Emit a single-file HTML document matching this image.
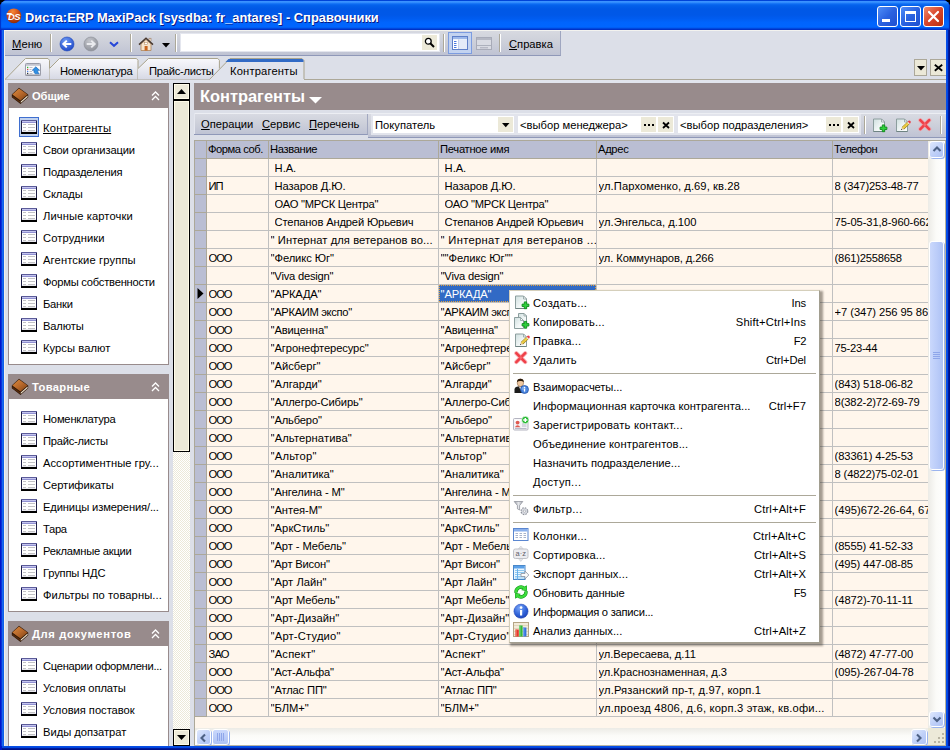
<!DOCTYPE html>
<html lang="ru"><head><meta charset="utf-8"><title>Dиста:ERP MaxiPack - Справочники</title>
<style>
*{box-sizing:border-box;margin:0;padding:0}
html,body{width:950px;height:750px;overflow:hidden;background:#000}
body{font-family:"Liberation Sans", "DejaVu Sans", sans-serif;font-size:11.2px;color:#000;position:relative;-webkit-font-smoothing:none}
.abs{position:absolute}
#win{position:absolute;left:0;top:0;width:950px;height:750px;background:#0054e3;border-radius:8px 8px 0 0;overflow:hidden;box-shadow:inset 1px 0 0 #0019cf,inset -1px 0 0 #0019cf}
#title{position:absolute;left:0;top:0;width:950px;height:30px;background:linear-gradient(to bottom,#0044d8 0%,#0044d8 2%,#3a92ff 5%,#2f8afc 9%,#0d6cf3 13%,#0360ea 19%,#0058e6 30%,#0058e8 50%,#005cf0 62%,#0064fc 74%,#0066ff 90%,#0058ec 93%,#0036cc 97%,#002cc0 100%);box-shadow:inset 2px 0 1px -1px #0030c8,inset -2px 0 1px -1px #0024b0}
#title .t{position:absolute;left:25px;top:9.5px;font-family:"Liberation Sans", "DejaVu Sans", sans-serif;font-weight:bold;font-size:13.5px;color:#fff;text-shadow:1px 1px 0 #0a1883;white-space:nowrap;transform-origin:0 50%;transform:scaleX(0.954)}
#client{position:absolute;left:4px;top:30px;width:942px;height:716px;background:#dcdfe8}
.nowrap{white-space:nowrap}
u{text-decoration:underline}
</style></head><body>
<div id="win">
<div id="title"><svg class="abs" style="left:6px;top:8px" width="16" height="16" viewBox="0 0 16 16">
<defs><radialGradient id="og" cx="42%" cy="22%" r="80%"><stop offset="0" stop-color="#f58838"/><stop offset="0.5" stop-color="#d04e16"/><stop offset="1" stop-color="#8c2a06"/></radialGradient></defs>
<circle cx="7.900" cy="7.800" r="7.400" fill="url(#og)"/>
<rect x="0.700" y="5" width="5" height="1.700" fill="#fff"/>
<text x="8" y="11.600" font-family="Liberation Sans, sans-serif" font-weight="bold" font-style="italic" font-size="9.400" fill="#fff" text-anchor="middle" letter-spacing="-0.500">DS</text></svg><div class="t">Dиста:ERP MaxiPack [sysdba: fr_antares] - Справочники</div><div class="abs" style="left:877px;top:6px;width:21px;height:21px;border:1px solid #fff;border-radius:3px;background:linear-gradient(135deg,#4f8df8 0%,#2b62e0 50%,#1e4fd0 100%)"><div class="abs" style="left:4px;top:12px;width:8px;height:3px;background:#fff"></div></div><div class="abs" style="left:900px;top:6px;width:21px;height:21px;border:1px solid #fff;border-radius:3px;background:linear-gradient(135deg,#4f8df8 0%,#2b62e0 50%,#1e4fd0 100%)"><div class="abs" style="left:4px;top:4px;width:11px;height:11px;border:1px solid #fff;border-top-width:3px"></div></div><div class="abs" style="left:923px;top:6px;width:21px;height:21px;border:1px solid #fff;border-radius:3px;background:linear-gradient(135deg,#ee8b6c 0%,#d8442a 50%,#b9300f 100%)"><svg class="abs" style="left:0;top:0" width="19" height="19"><path d="M5 5 L14 14 M14 5 L5 14" stroke="#fff" stroke-width="2.2" stroke-linecap="round"/></svg></div></div>
<div id="client"></div>
<div class="abs" style="left:4px;top:30px;width:942px;height:1px;background:#f3f3ef"></div><div class="abs" style="left:4px;top:31px;width:557px;height:25px;background:linear-gradient(to bottom,#d7d9e0 0%,#cccfd9 50%,#bfc3d3 100%);border-right:1px solid #9fa6c0;border-bottom:1px solid #8f98b8"></div><div class="abs nowrap" style="left:12px;top:38px"><u>М</u>еню</div><div class="abs" style="left:50px;top:34px;width:2px;height:18px;border-left:1px solid #aca899;border-right:1px solid #fff"></div><svg class="abs" style="left:59px;top:36px" width="16" height="16" viewBox="0 0 16 16"><defs><radialGradient id="bg1" cx="40%" cy="30%" r="75%"><stop offset="0" stop-color="#6f9cf5"/><stop offset="1" stop-color="#1c46c8"/></radialGradient></defs><circle cx="8" cy="8" r="7" fill="url(#bg1)" stroke="#2048b8" stroke-width="0.600"/><path d="M12.3 8 H4.5 M7.8 4.6 L4.3 8 L7.8 11.4" stroke="#fff" stroke-width="2" fill="none" stroke-linejoin="miter"/></svg><svg class="abs" style="left:83px;top:36px" width="16" height="16" viewBox="0 0 16 16"><defs><radialGradient id="bg2" cx="40%" cy="30%" r="75%"><stop offset="0" stop-color="#c4c6cc"/><stop offset="1" stop-color="#8c8f98"/></radialGradient></defs><circle cx="8" cy="8" r="7" fill="url(#bg2)" stroke="#8a8d96" stroke-width="0.600"/><path d="M3.7 8 H11.5 M8.2 4.6 L11.7 8 L8.2 11.4" stroke="#e9eaee" stroke-width="2" fill="none"/></svg><svg class="abs" style="left:109px;top:41px" width="10" height="7"><path d="M1 1.200 L5 4.800 L9 1.200" stroke="#2747d8" stroke-width="2" fill="none"/></svg><div class="abs" style="left:130px;top:34px;width:2px;height:18px;border-left:1px solid #aca899;border-right:1px solid #fff"></div><svg class="abs" style="left:138px;top:36px" width="16" height="16" viewBox="0 0 16 16"><rect x="11" y="2.200" width="2" height="3" fill="#f4e6d4" stroke="#8a6a50" stroke-width="0.500"/><path d="M3 8 L8 3.600 L13 8 V14.500 H3 Z" fill="#f6e4cc" stroke="#b08458" stroke-width="0.800"/><path d="M1 8.600 L8 2.200 L15 8.600" stroke="#4a3a30" stroke-width="1.500" fill="none"/><rect x="6.600" y="10" width="3" height="4.500" fill="#c8641e"/><rect x="6.600" y="6.300" width="2.800" height="2" fill="#fff" stroke="#b08458" stroke-width="0.500"/></svg><svg class="abs" style="left:161.500px;top:42.500px" width="8" height="5"><path d="M0 0 H8 L4 4.500 Z" fill="#000"/></svg><div class="abs" style="left:175px;top:34px;width:2px;height:18px;border-left:1px solid #aca899;border-right:1px solid #fff"></div><div class="abs" style="left:181px;top:34px;width:258px;height:17px;background:#fff;box-shadow:0 0 0 1px #e4e6ee"></div><div class="abs" style="left:422px;top:35px;width:15px;height:15px;background:#ece9d8"></div><svg class="abs" style="left:424px;top:37px" width="12" height="12" viewBox="0 0 12 12"><circle cx="4.300" cy="4.300" r="2.900" stroke="#000" stroke-width="1.300" fill="#fff"/><path d="M6.500 6.500 L10 10" stroke="#000" stroke-width="2"/></svg><div class="abs" style="left:443px;top:34px;width:2px;height:18px;border-left:1px solid #aca899;border-right:1px solid #fff"></div><div class="abs" style="left:448px;top:32px;width:24px;height:22px;background:#c3d3f0;border:1px solid #7c9ce0"></div><svg class="abs" style="left:452px;top:36px" width="16" height="14" viewBox="0 0 16 14"><rect x="0.5" y="0.5" width="15" height="13" fill="#fff" stroke="#5f80c8"/><rect x="1" y="1" width="14" height="2.200" fill="#9db8ea"/><rect x="6.500" y="3.500" width="0.800" height="9.500" fill="#8aa4dc"/><rect x="7.300" y="3.500" width="7.700" height="9.500" fill="#e4ebf8"/><path d="M2 5.500h2.500M2 7.500h2.500M2 9.500h2.500M2 11.500h2.500" stroke="#4a7ae0" stroke-width="1"/></svg><svg class="abs" style="left:476px;top:37px" width="16" height="13" viewBox="0 0 16 13"><rect x="0.5" y="0.5" width="15" height="12" fill="#d9dbe3" stroke="#a8abb8"/><rect x="1" y="1" width="14" height="2" fill="#b5b8c4"/><rect x="1" y="8" width="14" height="0.9" fill="#a8abb8"/><path d="M4 10.8h8" stroke="#a8abb8" stroke-width="1"/></svg><div class="abs" style="left:499px;top:34px;width:2px;height:18px;border-left:1px solid #aca899;border-right:1px solid #fff"></div><div class="abs nowrap" style="left:509px;top:38px"><u>С</u>правка</div><div class="abs" style="left:4px;top:79px;width:942px;height:1px;background:#aca899"></div><div class="abs" style="left:4px;top:80px;width:942px;height:3px;background:#e1e4ed"></div><svg class="abs" style="left:4px;top:57px" width="320" height="24" viewBox="0 0 320 24">
<defs><linearGradient id="tg" x1="0" y1="0" x2="0" y2="1"><stop offset="0" stop-color="#f8f8fc"/><stop offset="0.5" stop-color="#e9eaf1"/><stop offset="1" stop-color="#d6d8e4"/></linearGradient></defs>
<path d="M1 22.500 L21.500 1.500 H44 L45.500 3.300 V22.500 Z" fill="url(#tg)"/>
<path d="M1 22.500 L21.500 1.500 H44 L45.500 3.300 V22.500" fill="none" stroke="#a9a38c" stroke-width="1"/>
<path d="M45.500 11.500 L55.500 1.500 H132.500 L134 3.300 V22.500 H45.500 Z" fill="url(#tg)"/>
<path d="M45.500 11.500 L55.500 1.500 H132.500 L134 3.300 V22.500" fill="none" stroke="#a9a38c" stroke-width="1"/>
<path d="M134 11.500 L144.500 1.500 H213.800 L215.400 3.300 V11.500 L205.500 22.500 H134 Z" fill="url(#tg)"/>
<path d="M134 11.500 L144.500 1.500 H213.800 L215.400 3.300 V11.500" fill="none" stroke="#a9a38c" stroke-width="1"/>
<path d="M205.500 24 V22.500 L226 1.500 H298 L300 3.500 V24 Z" fill="#e0e3ec"/>
<path d="M205.500 22.500 L226 1.500 H298 L300 3.500 V22" fill="none" stroke="#a9a38c" stroke-width="1"/>
<path d="M224.500 2 H298.500 L299.500 3.500 V5 H221.500 Z" fill="#316ac5"/>
</svg><div class="abs nowrap" style="left:60px;top:65px;letter-spacing:-0.216px">Номенклатура</div><div class="abs nowrap" style="left:149px;top:65px;letter-spacing:-0.272px">Прайс-листы</div><div class="abs nowrap" style="left:230px;top:65px;letter-spacing:0.155px">Контрагенты</div><svg class="abs" style="left:25px;top:63px" width="16" height="13" viewBox="0 0 16 13"><rect x="0.500" y="0.500" width="15" height="12" rx="0.800" fill="#fbfbfd" stroke="#9a9ca8"/><rect x="1" y="1" width="14" height="1.800" fill="#c4c6d0"/><rect x="0.500" y="11.500" width="15" height="1" fill="#8a8c98"/><rect x="2" y="3.800" width="1.300" height="1.300" fill="#2fb82f"/><rect x="2" y="5.800" width="1.300" height="1.300" fill="#d84a40"/><rect x="2" y="7.800" width="1.300" height="1.300" fill="#4a84f0"/><rect x="2" y="9.800" width="1.300" height="1.300" fill="#333"/><path d="M4.500 4.500h3M4.500 6.500h2M4.500 8.500h2.500M4.500 10.500h3" stroke="#b8bac4" stroke-width="0.900"/><path d="M10.800 3.800 L14.600 7.300 H12.800 L12.800 9 L14.200 10.800 H10.200 L9 9.300 V7.300 H7.200 Z" fill="#2f90e4" stroke="#1a62b0" stroke-width="0.600"/></svg><div class="abs" style="left:914px;top:59px;width:13px;height:17px;background:#ece9d8;border:1px solid #aca899"></div><svg class="abs" style="left:916.5px;top:66px" width="8" height="5"><path d="M0 0 H8 L4 4.500 Z" fill="#000"/></svg><div class="abs" style="left:930px;top:59px;width:17px;height:17px;background:#ece9d8;border:1px solid #aca899"></div><svg class="abs" style="left:933.5px;top:64px" width="9" height="8"><path d="M0.800 0.800 L8.200 6.800 M8.200 0.800 L0.800 6.800" stroke="#000" stroke-width="1.800"/></svg><div class="abs" style="left:8px;top:83px;width:161px;height:282px;background:#fff;border:1px solid #988b8c"></div><div class="abs" style="left:8px;top:83px;width:161px;height:25px;background:#988b8c"></div><svg class="abs" style="left:11px;top:87px" width="18" height="18" viewBox="0 0 18 18"><defs><linearGradient id="bk87" x1="0" y1="0" x2="1" y2="1"><stop offset="0" stop-color="#dc8c40"/><stop offset="0.5" stop-color="#b8682a"/><stop offset="1" stop-color="#7a3f12"/></linearGradient></defs><path d="M0.800 7.500 L8 0.800 L17.200 7.500 L17.200 10.300 L9.500 17 L0.800 10.300 Z" fill="#2e1606"/><path d="M1.300 7.600 L8 1.500 L16.600 7.600 L9.500 13.600 Z" fill="url(#bk87)"/><path d="M9.700 14.400 L16.600 8.600 L16.600 10 L9.700 16 Z" fill="#efe4cf"/><path d="M1.400 8.700 L9.300 14.500 L9.300 16 L1.400 10 Z" fill="#5a2c0c"/></svg><div class="abs nowrap" style="left:32px;top:90px;color:#fff;font-weight:bold;letter-spacing:-0.111px">Общие</div><svg class="abs" style="left:151px;top:91px" width="9" height="10"><path d="M1 4.500 L4.500 1 L8 4.500 M1 9 L4.500 5.500 L8 9" stroke="#fff" stroke-width="1.300" fill="none"/></svg><div class="abs" style="left:19px;top:117px;width:20px;height:20px;background:#c1d2ee;border:1px solid #3f6fd0"></div><svg class="abs" style="left:21px;top:120px" width="16" height="14" viewBox="0 0 16 14"><rect x="0" y="0" width="16" height="14" fill="#1e1e46"/><rect x="1" y="1" width="14" height="11" fill="#fff"/><rect x="0" y="0" width="16" height="1" fill="#5c5c9a"/><rect x="1" y="1" width="14" height="1" fill="#c4c4ee"/><rect x="1" y="2" width="14" height="1" fill="#9090d2"/><rect x="0" y="12" width="16" height="2" fill="#000"/><rect x="1" y="11" width="14" height="1" fill="#e8e8ee"/><path d="M2 4.500h3M7 4.500h7M2 7.500h3M7 7.500h7M2 10.500h3M7 10.500h7" stroke="#c2c2c6" stroke-width="1"/></svg><div class="abs nowrap" style="left:43px;top:122px;letter-spacing:0.21px"><u>Контрагенты</u></div><svg class="abs" style="left:21px;top:142px" width="16" height="14" viewBox="0 0 16 14"><rect x="0" y="0" width="16" height="14" fill="#1e1e46"/><rect x="1" y="1" width="14" height="11" fill="#fff"/><rect x="0" y="0" width="16" height="1" fill="#5c5c9a"/><rect x="1" y="1" width="14" height="1" fill="#c4c4ee"/><rect x="1" y="2" width="14" height="1" fill="#9090d2"/><rect x="0" y="12" width="16" height="2" fill="#000"/><rect x="1" y="11" width="14" height="1" fill="#e8e8ee"/><path d="M2 4.500h3M7 4.500h7M2 7.500h3M7 7.500h7M2 10.500h3M7 10.500h7" stroke="#c2c2c6" stroke-width="1"/></svg><div class="abs nowrap" style="left:43px;top:144px;letter-spacing:-0.179px">Свои организации</div><svg class="abs" style="left:21px;top:164px" width="16" height="14" viewBox="0 0 16 14"><rect x="0" y="0" width="16" height="14" fill="#1e1e46"/><rect x="1" y="1" width="14" height="11" fill="#fff"/><rect x="0" y="0" width="16" height="1" fill="#5c5c9a"/><rect x="1" y="1" width="14" height="1" fill="#c4c4ee"/><rect x="1" y="2" width="14" height="1" fill="#9090d2"/><rect x="0" y="12" width="16" height="2" fill="#000"/><rect x="1" y="11" width="14" height="1" fill="#e8e8ee"/><path d="M2 4.500h3M7 4.500h7M2 7.500h3M7 7.500h7M2 10.500h3M7 10.500h7" stroke="#c2c2c6" stroke-width="1"/></svg><div class="abs nowrap" style="left:43px;top:166px;letter-spacing:-0.144px">Подразделения</div><svg class="abs" style="left:21px;top:186px" width="16" height="14" viewBox="0 0 16 14"><rect x="0" y="0" width="16" height="14" fill="#1e1e46"/><rect x="1" y="1" width="14" height="11" fill="#fff"/><rect x="0" y="0" width="16" height="1" fill="#5c5c9a"/><rect x="1" y="1" width="14" height="1" fill="#c4c4ee"/><rect x="1" y="2" width="14" height="1" fill="#9090d2"/><rect x="0" y="12" width="16" height="2" fill="#000"/><rect x="1" y="11" width="14" height="1" fill="#e8e8ee"/><path d="M2 4.500h3M7 4.500h7M2 7.500h3M7 7.500h7M2 10.500h3M7 10.500h7" stroke="#c2c2c6" stroke-width="1"/></svg><div class="abs nowrap" style="left:43px;top:188px;letter-spacing:-0.137px">Склады</div><svg class="abs" style="left:21px;top:208px" width="16" height="14" viewBox="0 0 16 14"><rect x="0" y="0" width="16" height="14" fill="#1e1e46"/><rect x="1" y="1" width="14" height="11" fill="#fff"/><rect x="0" y="0" width="16" height="1" fill="#5c5c9a"/><rect x="1" y="1" width="14" height="1" fill="#c4c4ee"/><rect x="1" y="2" width="14" height="1" fill="#9090d2"/><rect x="0" y="12" width="16" height="2" fill="#000"/><rect x="1" y="11" width="14" height="1" fill="#e8e8ee"/><path d="M2 4.500h3M7 4.500h7M2 7.500h3M7 7.500h7M2 10.500h3M7 10.500h7" stroke="#c2c2c6" stroke-width="1"/></svg><div class="abs nowrap" style="left:43px;top:210px;letter-spacing:0.102px">Личные карточки</div><svg class="abs" style="left:21px;top:230px" width="16" height="14" viewBox="0 0 16 14"><rect x="0" y="0" width="16" height="14" fill="#1e1e46"/><rect x="1" y="1" width="14" height="11" fill="#fff"/><rect x="0" y="0" width="16" height="1" fill="#5c5c9a"/><rect x="1" y="1" width="14" height="1" fill="#c4c4ee"/><rect x="1" y="2" width="14" height="1" fill="#9090d2"/><rect x="0" y="12" width="16" height="2" fill="#000"/><rect x="1" y="11" width="14" height="1" fill="#e8e8ee"/><path d="M2 4.500h3M7 4.500h7M2 7.500h3M7 7.500h7M2 10.500h3M7 10.500h7" stroke="#c2c2c6" stroke-width="1"/></svg><div class="abs nowrap" style="left:43px;top:232px;letter-spacing:0.109px">Сотрудники</div><svg class="abs" style="left:21px;top:252px" width="16" height="14" viewBox="0 0 16 14"><rect x="0" y="0" width="16" height="14" fill="#1e1e46"/><rect x="1" y="1" width="14" height="11" fill="#fff"/><rect x="0" y="0" width="16" height="1" fill="#5c5c9a"/><rect x="1" y="1" width="14" height="1" fill="#c4c4ee"/><rect x="1" y="2" width="14" height="1" fill="#9090d2"/><rect x="0" y="12" width="16" height="2" fill="#000"/><rect x="1" y="11" width="14" height="1" fill="#e8e8ee"/><path d="M2 4.500h3M7 4.500h7M2 7.500h3M7 7.500h7M2 10.500h3M7 10.500h7" stroke="#c2c2c6" stroke-width="1"/></svg><div class="abs nowrap" style="left:43px;top:254px;letter-spacing:0.131px">Агентские группы</div><svg class="abs" style="left:21px;top:274px" width="16" height="14" viewBox="0 0 16 14"><rect x="0" y="0" width="16" height="14" fill="#1e1e46"/><rect x="1" y="1" width="14" height="11" fill="#fff"/><rect x="0" y="0" width="16" height="1" fill="#5c5c9a"/><rect x="1" y="1" width="14" height="1" fill="#c4c4ee"/><rect x="1" y="2" width="14" height="1" fill="#9090d2"/><rect x="0" y="12" width="16" height="2" fill="#000"/><rect x="1" y="11" width="14" height="1" fill="#e8e8ee"/><path d="M2 4.500h3M7 4.500h7M2 7.500h3M7 7.500h7M2 10.500h3M7 10.500h7" stroke="#c2c2c6" stroke-width="1"/></svg><div class="abs nowrap" style="left:43px;top:276px;letter-spacing:-0.238px">Формы собственности</div><svg class="abs" style="left:21px;top:296px" width="16" height="14" viewBox="0 0 16 14"><rect x="0" y="0" width="16" height="14" fill="#1e1e46"/><rect x="1" y="1" width="14" height="11" fill="#fff"/><rect x="0" y="0" width="16" height="1" fill="#5c5c9a"/><rect x="1" y="1" width="14" height="1" fill="#c4c4ee"/><rect x="1" y="2" width="14" height="1" fill="#9090d2"/><rect x="0" y="12" width="16" height="2" fill="#000"/><rect x="1" y="11" width="14" height="1" fill="#e8e8ee"/><path d="M2 4.500h3M7 4.500h7M2 7.500h3M7 7.500h7M2 10.500h3M7 10.500h7" stroke="#c2c2c6" stroke-width="1"/></svg><div class="abs nowrap" style="left:43px;top:298px;letter-spacing:-0.238px">Банки</div><svg class="abs" style="left:21px;top:318px" width="16" height="14" viewBox="0 0 16 14"><rect x="0" y="0" width="16" height="14" fill="#1e1e46"/><rect x="1" y="1" width="14" height="11" fill="#fff"/><rect x="0" y="0" width="16" height="1" fill="#5c5c9a"/><rect x="1" y="1" width="14" height="1" fill="#c4c4ee"/><rect x="1" y="2" width="14" height="1" fill="#9090d2"/><rect x="0" y="12" width="16" height="2" fill="#000"/><rect x="1" y="11" width="14" height="1" fill="#e8e8ee"/><path d="M2 4.500h3M7 4.500h7M2 7.500h3M7 7.500h7M2 10.500h3M7 10.500h7" stroke="#c2c2c6" stroke-width="1"/></svg><div class="abs nowrap" style="left:43px;top:320px;letter-spacing:-0.155px">Валюты</div><svg class="abs" style="left:21px;top:340px" width="16" height="14" viewBox="0 0 16 14"><rect x="0" y="0" width="16" height="14" fill="#1e1e46"/><rect x="1" y="1" width="14" height="11" fill="#fff"/><rect x="0" y="0" width="16" height="1" fill="#5c5c9a"/><rect x="1" y="1" width="14" height="1" fill="#c4c4ee"/><rect x="1" y="2" width="14" height="1" fill="#9090d2"/><rect x="0" y="12" width="16" height="2" fill="#000"/><rect x="1" y="11" width="14" height="1" fill="#e8e8ee"/><path d="M2 4.500h3M7 4.500h7M2 7.500h3M7 7.500h7M2 10.500h3M7 10.500h7" stroke="#c2c2c6" stroke-width="1"/></svg><div class="abs nowrap" style="left:43px;top:342px;letter-spacing:0.055px">Курсы валют</div><div class="abs" style="left:8px;top:374px;width:161px;height:238px;background:#fff;border:1px solid #988b8c"></div><div class="abs" style="left:8px;top:374px;width:161px;height:25px;background:#988b8c"></div><svg class="abs" style="left:11px;top:378px" width="18" height="18" viewBox="0 0 18 18"><defs><linearGradient id="bk378" x1="0" y1="0" x2="1" y2="1"><stop offset="0" stop-color="#dc8c40"/><stop offset="0.5" stop-color="#b8682a"/><stop offset="1" stop-color="#7a3f12"/></linearGradient></defs><path d="M0.800 7.500 L8 0.800 L17.200 7.500 L17.200 10.300 L9.500 17 L0.800 10.300 Z" fill="#2e1606"/><path d="M1.300 7.600 L8 1.500 L16.600 7.600 L9.500 13.600 Z" fill="url(#bk378)"/><path d="M9.700 14.400 L16.600 8.600 L16.600 10 L9.700 16 Z" fill="#efe4cf"/><path d="M1.400 8.700 L9.300 14.500 L9.300 16 L1.400 10 Z" fill="#5a2c0c"/></svg><div class="abs nowrap" style="left:32px;top:381px;color:#fff;font-weight:bold;letter-spacing:0.34px">Товарные</div><svg class="abs" style="left:151px;top:382px" width="9" height="10"><path d="M1 4.500 L4.500 1 L8 4.500 M1 9 L4.500 5.500 L8 9" stroke="#fff" stroke-width="1.300" fill="none"/></svg><svg class="abs" style="left:21px;top:411px" width="16" height="14" viewBox="0 0 16 14"><rect x="0" y="0" width="16" height="14" fill="#1e1e46"/><rect x="1" y="1" width="14" height="11" fill="#fff"/><rect x="0" y="0" width="16" height="1" fill="#5c5c9a"/><rect x="1" y="1" width="14" height="1" fill="#c4c4ee"/><rect x="1" y="2" width="14" height="1" fill="#9090d2"/><rect x="0" y="12" width="16" height="2" fill="#000"/><rect x="1" y="11" width="14" height="1" fill="#e8e8ee"/><path d="M2 4.500h3M7 4.500h7M2 7.500h3M7 7.500h7M2 10.500h3M7 10.500h7" stroke="#c2c2c6" stroke-width="1"/></svg><div class="abs nowrap" style="left:43px;top:413px;letter-spacing:-0.208px">Номенклатура</div><svg class="abs" style="left:21px;top:433px" width="16" height="14" viewBox="0 0 16 14"><rect x="0" y="0" width="16" height="14" fill="#1e1e46"/><rect x="1" y="1" width="14" height="11" fill="#fff"/><rect x="0" y="0" width="16" height="1" fill="#5c5c9a"/><rect x="1" y="1" width="14" height="1" fill="#c4c4ee"/><rect x="1" y="2" width="14" height="1" fill="#9090d2"/><rect x="0" y="12" width="16" height="2" fill="#000"/><rect x="1" y="11" width="14" height="1" fill="#e8e8ee"/><path d="M2 4.500h3M7 4.500h7M2 7.500h3M7 7.500h7M2 10.500h3M7 10.500h7" stroke="#c2c2c6" stroke-width="1"/></svg><div class="abs nowrap" style="left:43px;top:435px;letter-spacing:-0.254px">Прайс-листы</div><svg class="abs" style="left:21px;top:455px" width="16" height="14" viewBox="0 0 16 14"><rect x="0" y="0" width="16" height="14" fill="#1e1e46"/><rect x="1" y="1" width="14" height="11" fill="#fff"/><rect x="0" y="0" width="16" height="1" fill="#5c5c9a"/><rect x="1" y="1" width="14" height="1" fill="#c4c4ee"/><rect x="1" y="2" width="14" height="1" fill="#9090d2"/><rect x="0" y="12" width="16" height="2" fill="#000"/><rect x="1" y="11" width="14" height="1" fill="#e8e8ee"/><path d="M2 4.500h3M7 4.500h7M2 7.500h3M7 7.500h7M2 10.500h3M7 10.500h7" stroke="#c2c2c6" stroke-width="1"/></svg><div class="abs nowrap" style="left:43px;top:457px;letter-spacing:0.034px">Ассортиментные гру...</div><svg class="abs" style="left:21px;top:477px" width="16" height="14" viewBox="0 0 16 14"><rect x="0" y="0" width="16" height="14" fill="#1e1e46"/><rect x="1" y="1" width="14" height="11" fill="#fff"/><rect x="0" y="0" width="16" height="1" fill="#5c5c9a"/><rect x="1" y="1" width="14" height="1" fill="#c4c4ee"/><rect x="1" y="2" width="14" height="1" fill="#9090d2"/><rect x="0" y="12" width="16" height="2" fill="#000"/><rect x="1" y="11" width="14" height="1" fill="#e8e8ee"/><path d="M2 4.500h3M7 4.500h7M2 7.500h3M7 7.500h7M2 10.500h3M7 10.500h7" stroke="#c2c2c6" stroke-width="1"/></svg><div class="abs nowrap" style="left:43px;top:479px;letter-spacing:-0.063px">Сертификаты</div><svg class="abs" style="left:21px;top:499px" width="16" height="14" viewBox="0 0 16 14"><rect x="0" y="0" width="16" height="14" fill="#1e1e46"/><rect x="1" y="1" width="14" height="11" fill="#fff"/><rect x="0" y="0" width="16" height="1" fill="#5c5c9a"/><rect x="1" y="1" width="14" height="1" fill="#c4c4ee"/><rect x="1" y="2" width="14" height="1" fill="#9090d2"/><rect x="0" y="12" width="16" height="2" fill="#000"/><rect x="1" y="11" width="14" height="1" fill="#e8e8ee"/><path d="M2 4.500h3M7 4.500h7M2 7.500h3M7 7.500h7M2 10.500h3M7 10.500h7" stroke="#c2c2c6" stroke-width="1"/></svg><div class="abs nowrap" style="left:43px;top:501px;letter-spacing:-0.147px">Единицы измерения/...</div><svg class="abs" style="left:21px;top:521px" width="16" height="14" viewBox="0 0 16 14"><rect x="0" y="0" width="16" height="14" fill="#1e1e46"/><rect x="1" y="1" width="14" height="11" fill="#fff"/><rect x="0" y="0" width="16" height="1" fill="#5c5c9a"/><rect x="1" y="1" width="14" height="1" fill="#c4c4ee"/><rect x="1" y="2" width="14" height="1" fill="#9090d2"/><rect x="0" y="12" width="16" height="2" fill="#000"/><rect x="1" y="11" width="14" height="1" fill="#e8e8ee"/><path d="M2 4.500h3M7 4.500h7M2 7.500h3M7 7.500h7M2 10.500h3M7 10.500h7" stroke="#c2c2c6" stroke-width="1"/></svg><div class="abs nowrap" style="left:43px;top:523px;letter-spacing:-0.3px">Тара</div><svg class="abs" style="left:21px;top:543px" width="16" height="14" viewBox="0 0 16 14"><rect x="0" y="0" width="16" height="14" fill="#1e1e46"/><rect x="1" y="1" width="14" height="11" fill="#fff"/><rect x="0" y="0" width="16" height="1" fill="#5c5c9a"/><rect x="1" y="1" width="14" height="1" fill="#c4c4ee"/><rect x="1" y="2" width="14" height="1" fill="#9090d2"/><rect x="0" y="12" width="16" height="2" fill="#000"/><rect x="1" y="11" width="14" height="1" fill="#e8e8ee"/><path d="M2 4.500h3M7 4.500h7M2 7.500h3M7 7.500h7M2 10.500h3M7 10.500h7" stroke="#c2c2c6" stroke-width="1"/></svg><div class="abs nowrap" style="left:43px;top:545px;letter-spacing:-0.242px">Рекламные акции</div><svg class="abs" style="left:21px;top:565px" width="16" height="14" viewBox="0 0 16 14"><rect x="0" y="0" width="16" height="14" fill="#1e1e46"/><rect x="1" y="1" width="14" height="11" fill="#fff"/><rect x="0" y="0" width="16" height="1" fill="#5c5c9a"/><rect x="1" y="1" width="14" height="1" fill="#c4c4ee"/><rect x="1" y="2" width="14" height="1" fill="#9090d2"/><rect x="0" y="12" width="16" height="2" fill="#000"/><rect x="1" y="11" width="14" height="1" fill="#e8e8ee"/><path d="M2 4.500h3M7 4.500h7M2 7.500h3M7 7.500h7M2 10.500h3M7 10.500h7" stroke="#c2c2c6" stroke-width="1"/></svg><div class="abs nowrap" style="left:43px;top:567px;letter-spacing:-0.183px">Группы НДС</div><svg class="abs" style="left:21px;top:587px" width="16" height="14" viewBox="0 0 16 14"><rect x="0" y="0" width="16" height="14" fill="#1e1e46"/><rect x="1" y="1" width="14" height="11" fill="#fff"/><rect x="0" y="0" width="16" height="1" fill="#5c5c9a"/><rect x="1" y="1" width="14" height="1" fill="#c4c4ee"/><rect x="1" y="2" width="14" height="1" fill="#9090d2"/><rect x="0" y="12" width="16" height="2" fill="#000"/><rect x="1" y="11" width="14" height="1" fill="#e8e8ee"/><path d="M2 4.500h3M7 4.500h7M2 7.500h3M7 7.500h7M2 10.500h3M7 10.500h7" stroke="#c2c2c6" stroke-width="1"/></svg><div class="abs nowrap" style="left:43px;top:589px;letter-spacing:0.083px">Фильтры по товарны...</div><div class="abs" style="left:8px;top:621px;width:161px;height:139px;background:#fff;border:1px solid #988b8c"></div><div class="abs" style="left:8px;top:621px;width:161px;height:25px;background:#988b8c"></div><svg class="abs" style="left:11px;top:625px" width="18" height="18" viewBox="0 0 18 18"><defs><linearGradient id="bk625" x1="0" y1="0" x2="1" y2="1"><stop offset="0" stop-color="#dc8c40"/><stop offset="0.5" stop-color="#b8682a"/><stop offset="1" stop-color="#7a3f12"/></linearGradient></defs><path d="M0.800 7.500 L8 0.800 L17.200 7.500 L17.200 10.300 L9.500 17 L0.800 10.300 Z" fill="#2e1606"/><path d="M1.300 7.600 L8 1.500 L16.600 7.600 L9.500 13.600 Z" fill="url(#bk625)"/><path d="M9.700 14.400 L16.600 8.600 L16.600 10 L9.700 16 Z" fill="#efe4cf"/><path d="M1.400 8.700 L9.300 14.500 L9.300 16 L1.400 10 Z" fill="#5a2c0c"/></svg><div class="abs nowrap" style="left:32px;top:628px;color:#fff;font-weight:bold;letter-spacing:0.641px">Для документов</div><svg class="abs" style="left:151px;top:629px" width="9" height="10"><path d="M1 4.500 L4.500 1 L8 4.500 M1 9 L4.500 5.500 L8 9" stroke="#fff" stroke-width="1.300" fill="none"/></svg><svg class="abs" style="left:21px;top:658px" width="16" height="14" viewBox="0 0 16 14"><rect x="0" y="0" width="16" height="14" fill="#1e1e46"/><rect x="1" y="1" width="14" height="11" fill="#fff"/><rect x="0" y="0" width="16" height="1" fill="#5c5c9a"/><rect x="1" y="1" width="14" height="1" fill="#c4c4ee"/><rect x="1" y="2" width="14" height="1" fill="#9090d2"/><rect x="0" y="12" width="16" height="2" fill="#000"/><rect x="1" y="11" width="14" height="1" fill="#e8e8ee"/><path d="M2 4.500h3M7 4.500h7M2 7.500h3M7 7.500h7M2 10.500h3M7 10.500h7" stroke="#c2c2c6" stroke-width="1"/></svg><div class="abs nowrap" style="left:43px;top:660px;letter-spacing:-0.285px">Сценарии оформлени...</div><svg class="abs" style="left:21px;top:680px" width="16" height="14" viewBox="0 0 16 14"><rect x="0" y="0" width="16" height="14" fill="#1e1e46"/><rect x="1" y="1" width="14" height="11" fill="#fff"/><rect x="0" y="0" width="16" height="1" fill="#5c5c9a"/><rect x="1" y="1" width="14" height="1" fill="#c4c4ee"/><rect x="1" y="2" width="14" height="1" fill="#9090d2"/><rect x="0" y="12" width="16" height="2" fill="#000"/><rect x="1" y="11" width="14" height="1" fill="#e8e8ee"/><path d="M2 4.500h3M7 4.500h7M2 7.500h3M7 7.500h7M2 10.500h3M7 10.500h7" stroke="#c2c2c6" stroke-width="1"/></svg><div class="abs nowrap" style="left:43px;top:682px;letter-spacing:-0.103px">Условия оплаты</div><svg class="abs" style="left:21px;top:702px" width="16" height="14" viewBox="0 0 16 14"><rect x="0" y="0" width="16" height="14" fill="#1e1e46"/><rect x="1" y="1" width="14" height="11" fill="#fff"/><rect x="0" y="0" width="16" height="1" fill="#5c5c9a"/><rect x="1" y="1" width="14" height="1" fill="#c4c4ee"/><rect x="1" y="2" width="14" height="1" fill="#9090d2"/><rect x="0" y="12" width="16" height="2" fill="#000"/><rect x="1" y="11" width="14" height="1" fill="#e8e8ee"/><path d="M2 4.500h3M7 4.500h7M2 7.500h3M7 7.500h7M2 10.500h3M7 10.500h7" stroke="#c2c2c6" stroke-width="1"/></svg><div class="abs nowrap" style="left:43px;top:704px;letter-spacing:-0.039px">Условия поставок</div><svg class="abs" style="left:21px;top:724px" width="16" height="14" viewBox="0 0 16 14"><rect x="0" y="0" width="16" height="14" fill="#1e1e46"/><rect x="1" y="1" width="14" height="11" fill="#fff"/><rect x="0" y="0" width="16" height="1" fill="#5c5c9a"/><rect x="1" y="1" width="14" height="1" fill="#c4c4ee"/><rect x="1" y="2" width="14" height="1" fill="#9090d2"/><rect x="0" y="12" width="16" height="2" fill="#000"/><rect x="1" y="11" width="14" height="1" fill="#e8e8ee"/><path d="M2 4.500h3M7 4.500h7M2 7.500h3M7 7.500h7M2 10.500h3M7 10.500h7" stroke="#c2c2c6" stroke-width="1"/></svg><div class="abs nowrap" style="left:43px;top:726px;letter-spacing:-0.032px">Виды допзатрат</div><div class="abs" style="left:173px;top:83px;width:17px;height:663px;background:repeating-conic-gradient(#fff 0% 25%,#ece9d8 0% 50%) 0 0/2px 2px"></div><div class="abs" style="left:173px;top:83px;width:17px;height:18px;background:#ece9d8;border:1px solid #000;border-bottom-width:2px;box-shadow:inset 1px 1px 0 #fffbe8,inset -1px -1px 0 #fffbe8"></div><svg class="abs" style="left:176px;top:88px" width="11" height="7"><path d="M1 6 H10 L5.500 1 Z" fill="#000"/></svg><div class="abs" style="left:173px;top:101px;width:17px;height:351px;background:#ece9d8;border:1px solid #000;border-top:none;box-shadow:inset 1px 1px 0 #fffbe8,inset -1px -1px 0 #fffbe8"></div><div class="abs" style="left:173px;top:729px;width:17px;height:17px;background:#ece9d8;border:1px solid #000;box-shadow:inset 1px 1px 0 #fffbe8,inset -1px -1px 0 #fffbe8"></div><svg class="abs" style="left:176px;top:734px" width="11" height="7"><path d="M1 1 H10 L5.500 6 Z" fill="#000"/></svg><div class="abs" style="left:194px;top:83px;width:752px;height:27px;background:#988b8c"></div><div class="abs nowrap" style="left:200px;top:87px;color:#fff;font-weight:bold;font-size:16.4px">Контрагенты</div><svg class="abs" style="left:309px;top:97px" width="13" height="7"><path d="M0 0 H13 L6.500 6.500 Z" fill="#fff"/></svg><div class="abs" style="left:194px;top:113px;width:174px;height:22px;background:linear-gradient(to bottom,#d9dbe3,#cdd0da 50%,#bfc3d4);border-bottom:1px solid #8f98b8;border-right:1px solid #a2a8c0"></div><div class="abs" style="left:368px;top:113px;width:578px;height:25px;background:linear-gradient(to bottom,#d9dbe3,#cdd0da 50%,#bfc3d4);border-bottom:1px solid #8f98b8"></div><div class="abs" style="left:194px;top:113px;width:752px;height:1px;background:#eceef3"></div><div class="abs" style="left:194px;top:113px;width:1px;height:21px;background:#e4e6ee"></div><div class="abs nowrap" style="left:201px;top:118px"><u>О</u>перации</div><div class="abs nowrap" style="left:262px;top:118px"><u>С</u>ервис</div><div class="abs nowrap" style="left:309px;top:118px"><u>П</u>еречень</div><div class="abs" style="left:371px;top:114px;width:490px;height:21px;background:#e2e4ec"></div><div class="abs" style="left:373px;top:116px;width:141px;height:17px;background:#fff"></div><div class="abs nowrap" style="left:375px;top:119px">Покупатель</div><div class="abs" style="left:498px;top:117px;width:15px;height:15px;background:#ece9d8"></div><svg class="abs" style="left:502px;top:123px" width="8" height="5"><path d="M0 0 H7.500 L3.750 4.200 Z" fill="#000"/></svg><div class="abs" style="left:518px;top:116px;width:156px;height:17px;background:#fff"></div><div class="abs nowrap" style="left:520px;top:119px">&lt;выбор менеджера&gt;</div><div class="abs" style="left:641px;top:117px;width:15px;height:15px;background:#ece9d8"></div><svg class="abs" style="left:644px;top:124px" width="11" height="3"><rect x="0" y="0" width="2" height="2"/><rect x="4" y="0" width="2" height="2"/><rect x="8" y="0" width="2" height="2"/></svg><div class="abs" style="left:658px;top:117px;width:15px;height:15px;background:#ece9d8"></div><svg class="abs" style="left:662px;top:121px" width="8" height="8"><path d="M1 1.500 L7 7 M7 1.500 L1 7" stroke="#000" stroke-width="1.800"/></svg><div class="abs" style="left:678px;top:116px;width:181px;height:17px;background:#fff"></div><div class="abs nowrap" style="left:680px;top:119px">&lt;выбор подразделения&gt;</div><div class="abs" style="left:826px;top:117px;width:15px;height:15px;background:#ece9d8"></div><svg class="abs" style="left:829px;top:124px" width="11" height="3"><rect x="0" y="0" width="2" height="2"/><rect x="4" y="0" width="2" height="2"/><rect x="8" y="0" width="2" height="2"/></svg><div class="abs" style="left:843px;top:117px;width:15px;height:15px;background:#ece9d8"></div><svg class="abs" style="left:847px;top:121px" width="8" height="8"><path d="M1 1.500 L7 7 M7 1.500 L1 7" stroke="#000" stroke-width="1.800"/></svg><div class="abs" style="left:864px;top:116px;width:2px;height:18px;border-left:1px solid #aca899;border-right:1px solid #fff"></div><div class="abs" style="left:940px;top:116px;width:2px;height:18px;border-left:1px solid #aca899;border-right:1px solid #fff"></div><svg class="abs" style="left:0;top:0" width="0" height="0"><defs><linearGradient id="pg" x1="0" y1="0" x2="1" y2="1"><stop offset="0" stop-color="#cfdfdf"/><stop offset="0.6" stop-color="#f2f7f7"/><stop offset="1" stop-color="#ffffff"/></linearGradient></defs></svg><svg class="abs" style="left:872px;top:117px" width="16" height="16" viewBox="0 0 16 16"><path d="M1.500 2 H9.500 L12.500 5 V14.500 H1.500 Z" fill="url(#pg)" stroke="#8c9e9e"/><path d="M9.500 2 V5 H12.500 Z" fill="#fff" stroke="#8c9e9e" stroke-width="0.8"/><path d="M1.500 14.500 H12.500" stroke="#6f8383"/><path d="M10.3 7.9 h2.4 v2.2 h2.2 v2.4 h-2.2 v2.2 h-2.4 v-2.2 h-2.2 v-2.4 h2.2 z" fill="#2fd03c" stroke="#0f8a1c" stroke-width="0.9" stroke-linejoin="round"/></svg><svg class="abs" style="left:895px;top:117px" width="16" height="16" viewBox="0 0 16 16"><path d="M1.500 2 H9.500 L12.500 5 V14.500 H1.500 Z" fill="url(#pg)" stroke="#8c9e9e"/><path d="M9.500 2 V5 H12.500 Z" fill="#fff" stroke="#8c9e9e" stroke-width="0.8"/><path d="M1.500 14.500 H12.500" stroke="#6f8383"/><path d="M13.300 6.100 L7.800 11.300" stroke="#8a6a10" stroke-width="3.200"/><path d="M13.300 6.100 L7.800 11.300" stroke="#f3d64e" stroke-width="2.200"/><path d="M12.500 6.900 L8.500 10.700" stroke="#c8a020" stroke-width="0.7" stroke-dasharray="1 1"/><circle cx="14.300" cy="5.100" r="1.500" fill="#e8404a"/><path d="M12.700 5.300 L14 6.700" stroke="#f4f4f4" stroke-width="1.100"/><path d="M6.200 12.800 L8.800 11.900 L7.200 10.300 Z" fill="#e8c890"/><path d="M6 13 L7.300 12.500 L6.500 11.700 Z" fill="#000"/></svg><svg class="abs" style="left:918px;top:117px" width="16" height="16" viewBox="0 0 16 16"><path d="M2.300 3.200 L11.200 12.100 M11.200 3.200 L2.300 12.100" stroke="#f79aa0" stroke-width="4.200" stroke-linecap="round" opacity="0.7"/><path d="M2.300 3.200 L11.200 12.100 M11.200 3.200 L2.300 12.100" stroke="#ef4048" stroke-width="2.600" stroke-linecap="round"/><circle cx="6.750" cy="7.650" r="1.400" fill="#f4666c"/></svg><div class="abs" style="left:194px;top:140px;width:734px;height:605px;background:#fff6ec;border-left:1px solid #aca899;border-top:1px solid #aca899"></div><div class="abs" style="left:195px;top:141px;width:733px;height:17px;background:#babed3"></div><div class="abs" style="left:195px;top:158px;width:733px;height:1px;background:#aca899"></div><div class="abs" style="left:195px;top:159px;width:11px;height:557px;background:#babed3"></div><div class="abs" style="left:206px;top:159px;width:1px;height:558px;background:#aca899"></div><div class="abs" style="left:206px;top:141px;width:1px;height:17px;background:#aca899"></div><div class="abs" style="left:268px;top:159px;width:1px;height:558px;background:#c0c0c0"></div><div class="abs" style="left:268px;top:141px;width:1px;height:17px;background:#aca899"></div><div class="abs" style="left:438px;top:159px;width:1px;height:558px;background:#c0c0c0"></div><div class="abs" style="left:438px;top:141px;width:1px;height:17px;background:#aca899"></div><div class="abs" style="left:596px;top:159px;width:1px;height:558px;background:#c0c0c0"></div><div class="abs" style="left:596px;top:141px;width:1px;height:17px;background:#aca899"></div><div class="abs" style="left:832px;top:159px;width:1px;height:558px;background:#c0c0c0"></div><div class="abs" style="left:832px;top:141px;width:1px;height:17px;background:#aca899"></div><div class="abs nowrap" style="left:208px;top:143px;letter-spacing:-0.444px">Форма соб.</div><div class="abs nowrap" style="left:270px;top:143px;letter-spacing:-0.35px">Название</div><div class="abs nowrap" style="left:440px;top:143px;letter-spacing:-0.28px">Печатное имя</div><div class="abs nowrap" style="left:598px;top:143px;letter-spacing:-0.326px">Адрес</div><div class="abs nowrap" style="left:834px;top:143px;letter-spacing:-0.46px">Телефон</div><div class="abs" style="left:207px;top:176px;width:721px;height:1px;background:#c0c0c0"></div><div class="abs" style="left:195px;top:176px;width:11px;height:1px;background:#aca899"></div><div class="abs nowrap" style="left:274.6px;top:162px;max-width:163.4px;padding-right:3px;box-sizing:border-box;overflow:hidden;letter-spacing:-0.041px">Н.А.</div><div class="abs nowrap" style="left:444.6px;top:162px;max-width:151.4px;padding-right:3px;box-sizing:border-box;overflow:hidden;letter-spacing:-0.041px">Н.А.</div><div class="abs" style="left:207px;top:194px;width:721px;height:1px;background:#c0c0c0"></div><div class="abs" style="left:195px;top:194px;width:11px;height:1px;background:#aca899"></div><div class="abs nowrap" style="left:208.6px;top:180px;max-width:59.4px;padding-right:3px;box-sizing:border-box;overflow:hidden;letter-spacing:-1.247px">ИП</div><div class="abs nowrap" style="left:274.6px;top:180px;max-width:163.4px;padding-right:3px;box-sizing:border-box;overflow:hidden;letter-spacing:-0.11px">Назаров Д.Ю.</div><div class="abs nowrap" style="left:444.6px;top:180px;max-width:151.4px;padding-right:3px;box-sizing:border-box;overflow:hidden;letter-spacing:-0.11px">Назаров Д.Ю.</div><div class="abs nowrap" style="left:598.6px;top:180px;max-width:233.4px;padding-right:3px;box-sizing:border-box;overflow:hidden;letter-spacing:0.074px">ул.Пархоменко, д.69, кв.28</div><div class="abs nowrap" style="left:834.6px;top:180px;max-width:93.4px;padding-right:3px;box-sizing:border-box;overflow:hidden;letter-spacing:-0.153px">8 (347)253-48-77</div><div class="abs" style="left:207px;top:212px;width:721px;height:1px;background:#c0c0c0"></div><div class="abs" style="left:195px;top:212px;width:11px;height:1px;background:#aca899"></div><div class="abs nowrap" style="left:274.6px;top:198px;max-width:163.4px;padding-right:3px;box-sizing:border-box;overflow:hidden;letter-spacing:-0.261px">ОАО &quot;МРСК Центра&quot;</div><div class="abs nowrap" style="left:444.6px;top:198px;max-width:151.4px;padding-right:3px;box-sizing:border-box;overflow:hidden;letter-spacing:-0.261px">ОАО &quot;МРСК Центра&quot;</div><div class="abs" style="left:207px;top:230px;width:721px;height:1px;background:#c0c0c0"></div><div class="abs" style="left:195px;top:230px;width:11px;height:1px;background:#aca899"></div><div class="abs nowrap" style="left:274.6px;top:216px;max-width:163.4px;padding-right:3px;box-sizing:border-box;overflow:hidden;letter-spacing:-0.166px">Степанов Андрей Юрьевич</div><div class="abs nowrap" style="left:444.6px;top:216px;max-width:151.4px;padding-right:3px;box-sizing:border-box;overflow:hidden;letter-spacing:-0.166px">Степанов Андрей Юрьевич</div><div class="abs nowrap" style="left:598.6px;top:216px;max-width:233.4px;padding-right:3px;box-sizing:border-box;overflow:hidden;letter-spacing:0.023px">ул.Энгельса, д.100</div><div class="abs nowrap" style="left:834.6px;top:216px;max-width:93.4px;padding-right:3px;box-sizing:border-box;overflow:hidden;letter-spacing:-0.106px">75-05-31,8-960-662</div><div class="abs" style="left:207px;top:248px;width:721px;height:1px;background:#c0c0c0"></div><div class="abs" style="left:195px;top:248px;width:11px;height:1px;background:#aca899"></div><div class="abs nowrap" style="left:270.6px;top:234px;max-width:167.4px;padding-right:3px;box-sizing:border-box;overflow:hidden;letter-spacing:0.083px">&quot; Интернат для ветеранов во...</div><div class="abs nowrap" style="left:440.6px;top:234px;max-width:155.4px;padding-right:3px;box-sizing:border-box;overflow:hidden;letter-spacing:0.323px">&quot; Интернат для ветеранов ...</div><div class="abs" style="left:207px;top:266px;width:721px;height:1px;background:#c0c0c0"></div><div class="abs" style="left:195px;top:266px;width:11px;height:1px;background:#aca899"></div><div class="abs nowrap" style="left:208.6px;top:252px;max-width:59.4px;padding-right:3px;box-sizing:border-box;overflow:hidden;letter-spacing:-1.103px">ООО</div><div class="abs nowrap" style="left:270.6px;top:252px;max-width:167.4px;padding-right:3px;box-sizing:border-box;overflow:hidden;letter-spacing:-0.09px">&quot;Феликс Юг&quot;</div><div class="abs nowrap" style="left:440.6px;top:252px;max-width:155.4px;padding-right:3px;box-sizing:border-box;overflow:hidden;letter-spacing:-0.01px">&quot;&quot;Феликс Юг&quot;&quot;</div><div class="abs nowrap" style="left:598.6px;top:252px;max-width:233.4px;padding-right:3px;box-sizing:border-box;overflow:hidden;letter-spacing:-0.107px">ул. Коммунаров, д.266</div><div class="abs nowrap" style="left:834.6px;top:252px;max-width:93.4px;padding-right:3px;box-sizing:border-box;overflow:hidden;letter-spacing:-0.198px">(861)2558658</div><div class="abs" style="left:207px;top:284px;width:721px;height:1px;background:#c0c0c0"></div><div class="abs" style="left:195px;top:284px;width:11px;height:1px;background:#aca899"></div><div class="abs nowrap" style="left:270.6px;top:270px;max-width:167.4px;padding-right:3px;box-sizing:border-box;overflow:hidden;letter-spacing:-0.215px">&quot;Viva design&quot;</div><div class="abs nowrap" style="left:440.6px;top:270px;max-width:155.4px;padding-right:3px;box-sizing:border-box;overflow:hidden;letter-spacing:-0.215px">&quot;Viva design&quot;</div><div class="abs" style="left:207px;top:302px;width:721px;height:1px;background:#c0c0c0"></div><div class="abs" style="left:195px;top:302px;width:11px;height:1px;background:#aca899"></div><div class="abs nowrap" style="left:208.6px;top:288px;max-width:59.4px;padding-right:3px;box-sizing:border-box;overflow:hidden;letter-spacing:-1.103px">ООО</div><div class="abs nowrap" style="left:270.6px;top:288px;max-width:167.4px;padding-right:3px;box-sizing:border-box;overflow:hidden;letter-spacing:-0.183px">&quot;АРКАДА&quot;</div><div class="abs" style="left:439px;top:285px;width:157px;height:17px;background:#316ac5;outline:1px dotted #e8a33a;outline-offset:-1px"></div><div class="abs nowrap" style="left:440.6px;top:288px;color:#fff;letter-spacing:-0.183px">&quot;АРКАДА&quot;</div><div class="abs" style="left:207px;top:320px;width:721px;height:1px;background:#c0c0c0"></div><div class="abs" style="left:195px;top:320px;width:11px;height:1px;background:#aca899"></div><div class="abs nowrap" style="left:208.6px;top:306px;max-width:59.4px;padding-right:3px;box-sizing:border-box;overflow:hidden;letter-spacing:-1.103px">ООО</div><div class="abs nowrap" style="left:270.6px;top:306px;max-width:167.4px;padding-right:3px;box-sizing:border-box;overflow:hidden;letter-spacing:-0.337px">&quot;АРКАИМ экспо&quot;</div><div class="abs nowrap" style="left:440.6px;top:306px;max-width:155.4px;padding-right:3px;box-sizing:border-box;overflow:hidden;letter-spacing:-0.337px">&quot;АРКАИМ экспо&quot;</div><div class="abs nowrap" style="left:834.6px;top:306px;max-width:93.4px;padding-right:3px;box-sizing:border-box;overflow:hidden;letter-spacing:-0.076px">+7 (347) 256 95 86</div><div class="abs" style="left:207px;top:338px;width:721px;height:1px;background:#c0c0c0"></div><div class="abs" style="left:195px;top:338px;width:11px;height:1px;background:#aca899"></div><div class="abs nowrap" style="left:208.6px;top:324px;max-width:59.4px;padding-right:3px;box-sizing:border-box;overflow:hidden;letter-spacing:-1.103px">ООО</div><div class="abs nowrap" style="left:270.6px;top:324px;max-width:167.4px;padding-right:3px;box-sizing:border-box;overflow:hidden;letter-spacing:-0.149px">&quot;Авиценна&quot;</div><div class="abs nowrap" style="left:440.6px;top:324px;max-width:155.4px;padding-right:3px;box-sizing:border-box;overflow:hidden;letter-spacing:-0.149px">&quot;Авиценна&quot;</div><div class="abs" style="left:207px;top:356px;width:721px;height:1px;background:#c0c0c0"></div><div class="abs" style="left:195px;top:356px;width:11px;height:1px;background:#aca899"></div><div class="abs nowrap" style="left:208.6px;top:342px;max-width:59.4px;padding-right:3px;box-sizing:border-box;overflow:hidden;letter-spacing:-1.103px">ООО</div><div class="abs nowrap" style="left:270.6px;top:342px;max-width:167.4px;padding-right:3px;box-sizing:border-box;overflow:hidden;letter-spacing:-0.108px">&quot;Агронефтересурс&quot;</div><div class="abs nowrap" style="left:440.6px;top:342px;max-width:155.4px;padding-right:3px;box-sizing:border-box;overflow:hidden;letter-spacing:-0.108px">&quot;Агронефтересурс&quot;</div><div class="abs nowrap" style="left:834.6px;top:342px;max-width:93.4px;padding-right:3px;box-sizing:border-box;overflow:hidden;letter-spacing:-0.262px">75-23-44</div><div class="abs" style="left:207px;top:374px;width:721px;height:1px;background:#c0c0c0"></div><div class="abs" style="left:195px;top:374px;width:11px;height:1px;background:#aca899"></div><div class="abs nowrap" style="left:208.6px;top:360px;max-width:59.4px;padding-right:3px;box-sizing:border-box;overflow:hidden;letter-spacing:-1.103px">ООО</div><div class="abs nowrap" style="left:270.6px;top:360px;max-width:167.4px;padding-right:3px;box-sizing:border-box;overflow:hidden;letter-spacing:-0.007px">&quot;Айсберг&quot;</div><div class="abs nowrap" style="left:440.6px;top:360px;max-width:155.4px;padding-right:3px;box-sizing:border-box;overflow:hidden;letter-spacing:-0.007px">&quot;Айсберг&quot;</div><div class="abs" style="left:207px;top:392px;width:721px;height:1px;background:#c0c0c0"></div><div class="abs" style="left:195px;top:392px;width:11px;height:1px;background:#aca899"></div><div class="abs nowrap" style="left:208.6px;top:378px;max-width:59.4px;padding-right:3px;box-sizing:border-box;overflow:hidden;letter-spacing:-1.103px">ООО</div><div class="abs nowrap" style="left:270.6px;top:378px;max-width:167.4px;padding-right:3px;box-sizing:border-box;overflow:hidden;letter-spacing:0.052px">&quot;Алгарди&quot;</div><div class="abs nowrap" style="left:440.6px;top:378px;max-width:155.4px;padding-right:3px;box-sizing:border-box;overflow:hidden;letter-spacing:0.052px">&quot;Алгарди&quot;</div><div class="abs nowrap" style="left:834.6px;top:378px;max-width:93.4px;padding-right:3px;box-sizing:border-box;overflow:hidden;letter-spacing:-0.129px">(843) 518-06-82</div><div class="abs" style="left:207px;top:410px;width:721px;height:1px;background:#c0c0c0"></div><div class="abs" style="left:195px;top:410px;width:11px;height:1px;background:#aca899"></div><div class="abs nowrap" style="left:208.6px;top:396px;max-width:59.4px;padding-right:3px;box-sizing:border-box;overflow:hidden;letter-spacing:-1.103px">ООО</div><div class="abs nowrap" style="left:270.6px;top:396px;max-width:167.4px;padding-right:3px;box-sizing:border-box;overflow:hidden;letter-spacing:-0.123px">&quot;Аллегро-Сибирь&quot;</div><div class="abs nowrap" style="left:440.6px;top:396px;max-width:155.4px;padding-right:3px;box-sizing:border-box;overflow:hidden;letter-spacing:-0.123px">&quot;Аллегро-Сибирь&quot;</div><div class="abs nowrap" style="left:834.6px;top:396px;max-width:93.4px;padding-right:3px;box-sizing:border-box;overflow:hidden;letter-spacing:-0.13px">8(382-2)72-69-79</div><div class="abs" style="left:207px;top:428px;width:721px;height:1px;background:#c0c0c0"></div><div class="abs" style="left:195px;top:428px;width:11px;height:1px;background:#aca899"></div><div class="abs nowrap" style="left:208.6px;top:414px;max-width:59.4px;padding-right:3px;box-sizing:border-box;overflow:hidden;letter-spacing:-1.103px">ООО</div><div class="abs nowrap" style="left:270.6px;top:414px;max-width:167.4px;padding-right:3px;box-sizing:border-box;overflow:hidden;letter-spacing:-0.169px">&quot;Альберо&quot;</div><div class="abs nowrap" style="left:440.6px;top:414px;max-width:155.4px;padding-right:3px;box-sizing:border-box;overflow:hidden;letter-spacing:-0.169px">&quot;Альберо&quot;</div><div class="abs" style="left:207px;top:446px;width:721px;height:1px;background:#c0c0c0"></div><div class="abs" style="left:195px;top:446px;width:11px;height:1px;background:#aca899"></div><div class="abs nowrap" style="left:208.6px;top:432px;max-width:59.4px;padding-right:3px;box-sizing:border-box;overflow:hidden;letter-spacing:-1.103px">ООО</div><div class="abs nowrap" style="left:270.6px;top:432px;max-width:167.4px;padding-right:3px;box-sizing:border-box;overflow:hidden;letter-spacing:0.092px">&quot;Альтернатива&quot;</div><div class="abs nowrap" style="left:440.6px;top:432px;max-width:155.4px;padding-right:3px;box-sizing:border-box;overflow:hidden;letter-spacing:0.092px">&quot;Альтернатива&quot;</div><div class="abs" style="left:207px;top:464px;width:721px;height:1px;background:#c0c0c0"></div><div class="abs" style="left:195px;top:464px;width:11px;height:1px;background:#aca899"></div><div class="abs nowrap" style="left:208.6px;top:450px;max-width:59.4px;padding-right:3px;box-sizing:border-box;overflow:hidden;letter-spacing:-1.103px">ООО</div><div class="abs nowrap" style="left:270.6px;top:450px;max-width:167.4px;padding-right:3px;box-sizing:border-box;overflow:hidden;letter-spacing:0.207px">&quot;Альтор&quot;</div><div class="abs nowrap" style="left:440.6px;top:450px;max-width:155.4px;padding-right:3px;box-sizing:border-box;overflow:hidden;letter-spacing:0.207px">&quot;Альтор&quot;</div><div class="abs nowrap" style="left:834.6px;top:450px;max-width:93.4px;padding-right:3px;box-sizing:border-box;overflow:hidden;letter-spacing:-0.129px">(83361) 4-25-53</div><div class="abs" style="left:207px;top:482px;width:721px;height:1px;background:#c0c0c0"></div><div class="abs" style="left:195px;top:482px;width:11px;height:1px;background:#aca899"></div><div class="abs nowrap" style="left:208.6px;top:468px;max-width:59.4px;padding-right:3px;box-sizing:border-box;overflow:hidden;letter-spacing:-1.103px">ООО</div><div class="abs nowrap" style="left:270.6px;top:468px;max-width:167.4px;padding-right:3px;box-sizing:border-box;overflow:hidden;letter-spacing:-0.012px">&quot;Аналитика&quot;</div><div class="abs nowrap" style="left:440.6px;top:468px;max-width:155.4px;padding-right:3px;box-sizing:border-box;overflow:hidden;letter-spacing:-0.012px">&quot;Аналитика&quot;</div><div class="abs nowrap" style="left:834.6px;top:468px;max-width:93.4px;padding-right:3px;box-sizing:border-box;overflow:hidden;letter-spacing:-0.153px">8 (4822)75-02-01</div><div class="abs" style="left:207px;top:500px;width:721px;height:1px;background:#c0c0c0"></div><div class="abs" style="left:195px;top:500px;width:11px;height:1px;background:#aca899"></div><div class="abs nowrap" style="left:208.6px;top:486px;max-width:59.4px;padding-right:3px;box-sizing:border-box;overflow:hidden;letter-spacing:-1.103px">ООО</div><div class="abs nowrap" style="left:270.6px;top:486px;max-width:167.4px;padding-right:3px;box-sizing:border-box;overflow:hidden;letter-spacing:-0.123px">&quot;Ангелина - М&quot;</div><div class="abs nowrap" style="left:440.6px;top:486px;max-width:155.4px;padding-right:3px;box-sizing:border-box;overflow:hidden;letter-spacing:-0.123px">&quot;Ангелина - М&quot;</div><div class="abs" style="left:207px;top:518px;width:721px;height:1px;background:#c0c0c0"></div><div class="abs" style="left:195px;top:518px;width:11px;height:1px;background:#aca899"></div><div class="abs nowrap" style="left:208.6px;top:504px;max-width:59.4px;padding-right:3px;box-sizing:border-box;overflow:hidden;letter-spacing:-1.103px">ООО</div><div class="abs nowrap" style="left:270.6px;top:504px;max-width:167.4px;padding-right:3px;box-sizing:border-box;overflow:hidden;letter-spacing:-0.078px">&quot;Антея-М&quot;</div><div class="abs nowrap" style="left:440.6px;top:504px;max-width:155.4px;padding-right:3px;box-sizing:border-box;overflow:hidden;letter-spacing:-0.078px">&quot;Антея-М&quot;</div><div class="abs nowrap" style="left:834.6px;top:504px;max-width:93.4px;padding-right:3px;box-sizing:border-box;overflow:hidden;letter-spacing:0.011px">(495)672-26-64, 67</div><div class="abs" style="left:207px;top:536px;width:721px;height:1px;background:#c0c0c0"></div><div class="abs" style="left:195px;top:536px;width:11px;height:1px;background:#aca899"></div><div class="abs nowrap" style="left:208.6px;top:522px;max-width:59.4px;padding-right:3px;box-sizing:border-box;overflow:hidden;letter-spacing:-1.103px">ООО</div><div class="abs nowrap" style="left:270.6px;top:522px;max-width:167.4px;padding-right:3px;box-sizing:border-box;overflow:hidden;letter-spacing:0.046px">&quot;АркСтиль&quot;</div><div class="abs nowrap" style="left:440.6px;top:522px;max-width:155.4px;padding-right:3px;box-sizing:border-box;overflow:hidden;letter-spacing:0.046px">&quot;АркСтиль&quot;</div><div class="abs" style="left:207px;top:554px;width:721px;height:1px;background:#c0c0c0"></div><div class="abs" style="left:195px;top:554px;width:11px;height:1px;background:#aca899"></div><div class="abs nowrap" style="left:208.6px;top:540px;max-width:59.4px;padding-right:3px;box-sizing:border-box;overflow:hidden;letter-spacing:-1.103px">ООО</div><div class="abs nowrap" style="left:270.6px;top:540px;max-width:167.4px;padding-right:3px;box-sizing:border-box;overflow:hidden;letter-spacing:-0.092px">&quot;Арт - Мебель&quot;</div><div class="abs nowrap" style="left:440.6px;top:540px;max-width:155.4px;padding-right:3px;box-sizing:border-box;overflow:hidden;letter-spacing:-0.092px">&quot;Арт - Мебель&quot;</div><div class="abs nowrap" style="left:834.6px;top:540px;max-width:93.4px;padding-right:3px;box-sizing:border-box;overflow:hidden;letter-spacing:-0.129px">(8555) 41-52-33</div><div class="abs" style="left:207px;top:572px;width:721px;height:1px;background:#c0c0c0"></div><div class="abs" style="left:195px;top:572px;width:11px;height:1px;background:#aca899"></div><div class="abs nowrap" style="left:208.6px;top:558px;max-width:59.4px;padding-right:3px;box-sizing:border-box;overflow:hidden;letter-spacing:-1.103px">ООО</div><div class="abs nowrap" style="left:270.6px;top:558px;max-width:167.4px;padding-right:3px;box-sizing:border-box;overflow:hidden;letter-spacing:-0.205px">&quot;Арт Висон&quot;</div><div class="abs nowrap" style="left:440.6px;top:558px;max-width:155.4px;padding-right:3px;box-sizing:border-box;overflow:hidden;letter-spacing:-0.205px">&quot;Арт Висон&quot;</div><div class="abs nowrap" style="left:834.6px;top:558px;max-width:93.4px;padding-right:3px;box-sizing:border-box;overflow:hidden;letter-spacing:-0.129px">(495) 447-08-85</div><div class="abs" style="left:207px;top:590px;width:721px;height:1px;background:#c0c0c0"></div><div class="abs" style="left:195px;top:590px;width:11px;height:1px;background:#aca899"></div><div class="abs nowrap" style="left:208.6px;top:576px;max-width:59.4px;padding-right:3px;box-sizing:border-box;overflow:hidden;letter-spacing:-1.103px">ООО</div><div class="abs nowrap" style="left:270.6px;top:576px;max-width:167.4px;padding-right:3px;box-sizing:border-box;overflow:hidden;letter-spacing:0.039px">&quot;Арт Лайн&quot;</div><div class="abs nowrap" style="left:440.6px;top:576px;max-width:155.4px;padding-right:3px;box-sizing:border-box;overflow:hidden;letter-spacing:0.039px">&quot;Арт Лайн&quot;</div><div class="abs" style="left:207px;top:608px;width:721px;height:1px;background:#c0c0c0"></div><div class="abs" style="left:195px;top:608px;width:11px;height:1px;background:#aca899"></div><div class="abs nowrap" style="left:208.6px;top:594px;max-width:59.4px;padding-right:3px;box-sizing:border-box;overflow:hidden;letter-spacing:-1.103px">ООО</div><div class="abs nowrap" style="left:270.6px;top:594px;max-width:167.4px;padding-right:3px;box-sizing:border-box;overflow:hidden;letter-spacing:-0.071px">&quot;Арт Мебель&quot;</div><div class="abs nowrap" style="left:440.6px;top:594px;max-width:155.4px;padding-right:3px;box-sizing:border-box;overflow:hidden;letter-spacing:-0.071px">&quot;Арт Мебель&quot;</div><div class="abs nowrap" style="left:834.6px;top:594px;max-width:93.4px;padding-right:3px;box-sizing:border-box;overflow:hidden;letter-spacing:-0.052px">(4872)-70-11-11</div><div class="abs" style="left:207px;top:626px;width:721px;height:1px;background:#c0c0c0"></div><div class="abs" style="left:195px;top:626px;width:11px;height:1px;background:#aca899"></div><div class="abs nowrap" style="left:208.6px;top:612px;max-width:59.4px;padding-right:3px;box-sizing:border-box;overflow:hidden;letter-spacing:-1.103px">ООО</div><div class="abs nowrap" style="left:270.6px;top:612px;max-width:167.4px;padding-right:3px;box-sizing:border-box;overflow:hidden;letter-spacing:0.08px">&quot;Арт-Дизайн&quot;</div><div class="abs nowrap" style="left:440.6px;top:612px;max-width:155.4px;padding-right:3px;box-sizing:border-box;overflow:hidden;letter-spacing:0.08px">&quot;Арт-Дизайн&quot;</div><div class="abs" style="left:207px;top:644px;width:721px;height:1px;background:#c0c0c0"></div><div class="abs" style="left:195px;top:644px;width:11px;height:1px;background:#aca899"></div><div class="abs nowrap" style="left:208.6px;top:630px;max-width:59.4px;padding-right:3px;box-sizing:border-box;overflow:hidden;letter-spacing:-1.103px">ООО</div><div class="abs nowrap" style="left:270.6px;top:630px;max-width:167.4px;padding-right:3px;box-sizing:border-box;overflow:hidden;letter-spacing:0.185px">&quot;Арт-Студио&quot;</div><div class="abs nowrap" style="left:440.6px;top:630px;max-width:155.4px;padding-right:3px;box-sizing:border-box;overflow:hidden;letter-spacing:0.185px">&quot;Арт-Студио&quot;</div><div class="abs" style="left:207px;top:662px;width:721px;height:1px;background:#c0c0c0"></div><div class="abs" style="left:195px;top:662px;width:11px;height:1px;background:#aca899"></div><div class="abs nowrap" style="left:208.6px;top:648px;max-width:59.4px;padding-right:3px;box-sizing:border-box;overflow:hidden;letter-spacing:-0.896px">ЗАО</div><div class="abs nowrap" style="left:270.6px;top:648px;max-width:167.4px;padding-right:3px;box-sizing:border-box;overflow:hidden;letter-spacing:0.17px">&quot;Аспект&quot;</div><div class="abs nowrap" style="left:440.6px;top:648px;max-width:155.4px;padding-right:3px;box-sizing:border-box;overflow:hidden;letter-spacing:0.17px">&quot;Аспект&quot;</div><div class="abs nowrap" style="left:598.6px;top:648px;max-width:233.4px;padding-right:3px;box-sizing:border-box;overflow:hidden;letter-spacing:-0.081px">ул.Вересаева, д.11</div><div class="abs nowrap" style="left:834.6px;top:648px;max-width:93.4px;padding-right:3px;box-sizing:border-box;overflow:hidden;letter-spacing:-0.122px">(4872) 47-77-00</div><div class="abs" style="left:207px;top:680px;width:721px;height:1px;background:#c0c0c0"></div><div class="abs" style="left:195px;top:680px;width:11px;height:1px;background:#aca899"></div><div class="abs nowrap" style="left:208.6px;top:666px;max-width:59.4px;padding-right:3px;box-sizing:border-box;overflow:hidden;letter-spacing:-1.103px">ООО</div><div class="abs nowrap" style="left:270.6px;top:666px;max-width:167.4px;padding-right:3px;box-sizing:border-box;overflow:hidden;letter-spacing:-0.172px">&quot;Аст-Альфа&quot;</div><div class="abs nowrap" style="left:440.6px;top:666px;max-width:155.4px;padding-right:3px;box-sizing:border-box;overflow:hidden;letter-spacing:-0.172px">&quot;Аст-Альфа&quot;</div><div class="abs nowrap" style="left:598.6px;top:666px;max-width:233.4px;padding-right:3px;box-sizing:border-box;overflow:hidden;letter-spacing:-0.068px">ул.Краснознаменная, д.3</div><div class="abs nowrap" style="left:834.6px;top:666px;max-width:93.4px;padding-right:3px;box-sizing:border-box;overflow:hidden;letter-spacing:-0.124px">(095)-267-04-78</div><div class="abs" style="left:207px;top:698px;width:721px;height:1px;background:#c0c0c0"></div><div class="abs" style="left:195px;top:698px;width:11px;height:1px;background:#aca899"></div><div class="abs nowrap" style="left:208.6px;top:684px;max-width:59.4px;padding-right:3px;box-sizing:border-box;overflow:hidden;letter-spacing:-1.103px">ООО</div><div class="abs nowrap" style="left:270.6px;top:684px;max-width:167.4px;padding-right:3px;box-sizing:border-box;overflow:hidden;letter-spacing:-0.158px">&quot;Атлас ПП&quot;</div><div class="abs nowrap" style="left:440.6px;top:684px;max-width:155.4px;padding-right:3px;box-sizing:border-box;overflow:hidden;letter-spacing:-0.158px">&quot;Атлас ПП&quot;</div><div class="abs nowrap" style="left:598.6px;top:684px;max-width:233.4px;padding-right:3px;box-sizing:border-box;overflow:hidden;letter-spacing:0.109px">ул.Рязанский пр-т, д.97, корп.1</div><div class="abs" style="left:207px;top:716px;width:721px;height:1px;background:#c0c0c0"></div><div class="abs" style="left:195px;top:716px;width:11px;height:1px;background:#aca899"></div><div class="abs nowrap" style="left:208.6px;top:702px;max-width:59.4px;padding-right:3px;box-sizing:border-box;overflow:hidden;letter-spacing:-1.103px">ООО</div><div class="abs nowrap" style="left:270.6px;top:702px;max-width:167.4px;padding-right:3px;box-sizing:border-box;overflow:hidden;letter-spacing:-0.081px">&quot;БЛМ+&quot;</div><div class="abs nowrap" style="left:440.6px;top:702px;max-width:155.4px;padding-right:3px;box-sizing:border-box;overflow:hidden;letter-spacing:-0.081px">&quot;БЛМ+&quot;</div><div class="abs nowrap" style="left:598.6px;top:702px;max-width:233.4px;padding-right:3px;box-sizing:border-box;overflow:hidden;letter-spacing:0.176px">ул.проезд 4806, д.6, корп.3 этаж, кв.офи...</div><svg class="abs" style="left:197px;top:288px" width="7" height="11"><path d="M0.500 0 V11 L6.500 5.500 Z" fill="#000"/></svg><div class="abs" style="left:928px;top:140px;width:18px;height:588px;background:linear-gradient(to right,#ecebe6,#fbfbf8 45%,#fff)"></div><div class="abs" style="left:930px;top:142px;width:13px;height:15px;background:linear-gradient(135deg,#dfe8fd,#bfd0f8 55%,#aec2f5);border-radius:2.5px;box-shadow:0 0 0 1px #fff, 1px 1px 0 1px #9bb4ee"></div><svg class="abs" style="left:931.5px;top:145.0px" width="10" height="10"><path d="M1.5 6 L5 2.5 L8.5 6" stroke="#4d6185" stroke-width="2.1" fill="none"/></svg><div class="abs" style="left:930px;top:712px;width:13px;height:14px;background:linear-gradient(135deg,#dfe8fd,#bfd0f8 55%,#aec2f5);border-radius:2.5px;box-shadow:0 0 0 1px #fff, 1px 1px 0 1px #9bb4ee"></div><svg class="abs" style="left:931.5px;top:714.5px" width="10" height="10"><path d="M1.5 2.5 L5 6 L8.5 2.5" stroke="#4d6185" stroke-width="2.1" fill="none"/></svg><div class="abs" style="left:930px;top:242px;width:13px;height:227px;background:linear-gradient(to right,#cad8fc,#bccdf9 50%,#aec2f5);border-radius:2.5px;box-shadow:0 0 0 1px #fff, 1px 1px 0 1px #9bb4ee"></div><svg class="abs" style="left:933px;top:352px" width="8" height="8"><path d="M0 0.5h7M0 2.5h7M0 4.500h7M0 6.500h7" stroke="#8ea6ea" stroke-width="1"/></svg><div class="abs" style="left:195px;top:728px;width:733px;height:17px;background:linear-gradient(to bottom,#ecebe6,#fbfbf8 45%,#fff)"></div><div class="abs" style="left:197px;top:730px;width:13px;height:14px;background:linear-gradient(135deg,#dfe8fd,#bfd0f8 55%,#aec2f5);border-radius:2.5px;box-shadow:0 0 0 1px #fff, 1px 1px 0 1px #9bb4ee"></div><svg class="abs" style="left:198.5px;top:732.5px" width="10" height="10"><path d="M6 1.5 L2.5 5 L6 8.5" stroke="#4d6185" stroke-width="2.1" fill="none"/></svg><div class="abs" style="left:912px;top:730px;width:14px;height:14px;background:linear-gradient(135deg,#dfe8fd,#bfd0f8 55%,#aec2f5);border-radius:2.5px;box-shadow:0 0 0 1px #fff, 1px 1px 0 1px #9bb4ee"></div><svg class="abs" style="left:914.0px;top:732.5px" width="10" height="10"><path d="M3 1.5 L6.5 5 L3 8.5" stroke="#4d6185" stroke-width="2.1" fill="none"/></svg><div class="abs" style="left:213px;top:730px;width:15px;height:14px;background:linear-gradient(to bottom,#cad8fc,#aec2f5);border-radius:2.5px;box-shadow:0 0 0 1px #fff, 1px 1px 0 1px #9bb4ee"></div><svg class="abs" style="left:217px;top:733px" width="8" height="8"><path d="M0.5 0v8M2.5 0v8M4.500 0v8M6.500 0v8" stroke="#8ea6ea" stroke-width="1"/></svg><div class="abs" style="left:928px;top:728px;width:17px;height:17px;background:#ece9d8"></div><div class="abs" style="left:194px;top:745px;width:752px;height:1px;background:#b8b4a4"></div><div class="abs" style="left:945px;top:140px;width:1px;height:606px;background:#b8b29c"></div><div class="abs" style="left:928px;top:140px;width:18px;height:1px;background:#aca899"></div><svg class="abs" style="left:933px;top:732px" width="12" height="12"><path d="M9 1h2v2h-2zM9 5h2v2h-2zM9 9h2v2h-2zM5 5h2v2h-2zM5 9h2v2h-2zM1 9h2v2h-2z" fill="#b8b4a2"/></svg><div class="abs" style="left:509px;top:290px;width:311px;height:353px;background:#fff;border:1px solid;border-color:#d5cfbb #a29e90 #a29e90 #d5cfbb;box-shadow:2px 2px 2px 1px rgba(40,30,20,0.42)"></div><svg class="abs" style="left:514px;top:294px" width="16" height="16" viewBox="0 0 16 16"><path d="M1.500 2 H9.500 L12.500 5 V14.500 H1.500 Z" fill="url(#pg)" stroke="#8c9e9e"/><path d="M9.500 2 V5 H12.500 Z" fill="#fff" stroke="#8c9e9e" stroke-width="0.8"/><path d="M1.500 14.500 H12.500" stroke="#6f8383"/><path d="M10.3 7.9 h2.4 v2.2 h2.2 v2.4 h-2.2 v2.2 h-2.4 v-2.2 h-2.2 v-2.4 h2.2 z" fill="#2fd03c" stroke="#0f8a1c" stroke-width="0.9" stroke-linejoin="round"/></svg><div class="abs nowrap" style="left:533px;top:297px;letter-spacing:0.236px">Создать...</div><div class="abs nowrap" style="left:791.4px;top:297px;letter-spacing:-0.113px">Ins</div><svg class="abs" style="left:514px;top:313px" width="16" height="16" viewBox="0 0 16 16"><path d="M4.500 0.500 H10 L12.500 3 V10.500 H4.500 Z" fill="url(#pg)" stroke="#8c9e9e"/><path d="M10 0.500 V3 H12.500 Z" fill="#fff" stroke="#8c9e9e" stroke-width="0.8"/><path d="M0.500 4.500 H6.500 L9.500 7.500 V15.500 H0.500 Z" fill="url(#pg)" stroke="#8c9e9e"/><path d="M6.500 4.500 V7.500 H9.500 Z" fill="#fff" stroke="#8c9e9e" stroke-width="0.8"/><path d="M10.3 8.4 h2.4 v2.2 h2.2 v2.4 h-2.2 v2.2 h-2.4 v-2.2 h-2.2 v-2.4 h2.2 z" fill="#2fd03c" stroke="#0f8a1c" stroke-width="0.9" stroke-linejoin="round"/></svg><div class="abs nowrap" style="left:533px;top:316px;letter-spacing:0.18px">Копировать...</div><div class="abs nowrap" style="left:735.8px;top:316px;letter-spacing:0.173px">Shift+Ctrl+Ins</div><svg class="abs" style="left:514px;top:332px" width="16" height="16" viewBox="0 0 16 16"><path d="M1.500 2 H9.500 L12.500 5 V14.500 H1.500 Z" fill="url(#pg)" stroke="#8c9e9e"/><path d="M9.500 2 V5 H12.500 Z" fill="#fff" stroke="#8c9e9e" stroke-width="0.8"/><path d="M1.500 14.500 H12.500" stroke="#6f8383"/><path d="M13.300 6.100 L7.800 11.300" stroke="#8a6a10" stroke-width="3.200"/><path d="M13.300 6.100 L7.800 11.300" stroke="#f3d64e" stroke-width="2.200"/><path d="M12.500 6.900 L8.500 10.700" stroke="#c8a020" stroke-width="0.7" stroke-dasharray="1 1"/><circle cx="14.300" cy="5.100" r="1.500" fill="#e8404a"/><path d="M12.700 5.300 L14 6.700" stroke="#f4f4f4" stroke-width="1.100"/><path d="M6.200 12.800 L8.800 11.900 L7.200 10.300 Z" fill="#e8c890"/><path d="M6 13 L7.300 12.500 L6.500 11.700 Z" fill="#000"/></svg><div class="abs nowrap" style="left:533px;top:335px;letter-spacing:0.131px">Правка...</div><div class="abs nowrap" style="left:793.8px;top:335px;letter-spacing:-0.431px">F2</div><svg class="abs" style="left:514px;top:350px" width="16" height="16" viewBox="0 0 16 16"><path d="M2.300 3.200 L11.200 12.100 M11.200 3.200 L2.300 12.100" stroke="#f79aa0" stroke-width="4.200" stroke-linecap="round" opacity="0.7"/><path d="M2.300 3.200 L11.200 12.100 M11.200 3.200 L2.300 12.100" stroke="#ef4048" stroke-width="2.600" stroke-linecap="round"/><circle cx="6.750" cy="7.650" r="1.400" fill="#f4666c"/></svg><div class="abs nowrap" style="left:533px;top:354px;letter-spacing:0.154px">Удалить</div><div class="abs nowrap" style="left:766px;top:354px;letter-spacing:-0.09px">Ctrl+Del</div><div class="abs" style="left:513px;top:373px;width:303px;height:1px;background:#aca899"></div><svg class="abs" style="left:513px;top:377.5px;overflow:visible" width="17" height="17" viewBox="0 0 17 17"><path d="M1.500 15 V11.500 Q1.500 8.300 7.400 8.300 Q13 8.300 13 11.500 V15 Z" fill="#1c1c1c"/><path d="M6 8.400 L7.400 12 L8.800 8.400 Z" fill="#fff"/><ellipse cx="7.400" cy="4.800" rx="3.200" ry="3.800" fill="#f0c8a0" stroke="#7a5030" stroke-width="0.5"/><path d="M4 4.200 Q4 0.800 7.400 0.800 Q10.800 0.800 10.800 4.200 Q9 2.600 7.400 3 Q5.500 2.800 4 4.200 Z" fill="#2a1a0a"/><circle cx="11.500" cy="11.500" r="4" fill="#4a86e0" stroke="#1c4aa0" stroke-width="0.7"/><circle cx="10.600" cy="10.400" r="2" fill="#8fb8f4" opacity="0.6"/><rect x="10.900" y="10.600" width="1.300" height="3" fill="#fff"/><rect x="10.900" y="8.900" width="1.300" height="1.100" fill="#fff"/></svg><div class="abs nowrap" style="left:533px;top:381px;letter-spacing:-0.11px">Взаиморасчеты...</div><div class="abs nowrap" style="left:533px;top:400px;letter-spacing:0.016px">Информационная карточка контрагента...</div><div class="abs nowrap" style="left:768.8px;top:400px;letter-spacing:0.029px">Ctrl+F7</div><svg class="abs" style="left:513px;top:416px;overflow:visible" width="17" height="17" viewBox="0 0 17 17"><rect x="0.500" y="2.500" width="14.500" height="11.500" rx="1" fill="#f3f3f6" stroke="#b4b4c0"/><rect x="1.500" y="3.500" width="12.500" height="1.500" fill="#fff"/><circle cx="4.600" cy="6.600" r="1.900" fill="#e05a50"/><path d="M1.800 11.300 Q4.600 7 7.400 11.300 Z" fill="#e05a50"/><path d="M9 8h4.500M9 10h4.500M2 12.500h11.500" stroke="#b8b8c8" stroke-width="1"/><circle cx="12.300" cy="4" r="3.700" fill="#22b82e" stroke="#fff" stroke-width="0.7"/><path d="M10.200 4h4.200M12.300 1.900v4.200" stroke="#fff" stroke-width="1.500"/></svg><div class="abs nowrap" style="left:533px;top:419px;letter-spacing:0.218px">Зарегистрировать контакт...</div><div class="abs nowrap" style="left:533px;top:438px;letter-spacing:0.109px">Объединение контрагентов...</div><div class="abs nowrap" style="left:533px;top:457px;letter-spacing:0.032px">Назначить подразделение...</div><div class="abs nowrap" style="left:533px;top:476px;letter-spacing:0.283px">Доступ...</div><div class="abs" style="left:513px;top:495px;width:303px;height:1px;background:#aca899"></div><svg class="abs" style="left:513px;top:500px;overflow:visible" width="17" height="17" viewBox="0 0 17 17"><defs><linearGradient id="fg" x1="0" y1="0" x2="1" y2="0"><stop offset="0" stop-color="#9a9ea8"/><stop offset="0.5" stop-color="#e4e6ea"/><stop offset="1" stop-color="#a8acb4"/></linearGradient></defs><path d="M1.200 1.500 H9.800 L6.600 5.500 V10 L4.400 8.800 V5.500 Z" fill="url(#fg)" stroke="#868a94" stroke-width="0.7"/><circle cx="11.400" cy="11.200" r="3.300" fill="#d0d3da" stroke="#8c909a" stroke-width="1.300" stroke-dasharray="1.500 1.100"/><circle cx="11.400" cy="11.200" r="2.600" fill="#d8dae0"/><circle cx="11.400" cy="11.200" r="1.100" fill="#fff" stroke="#8c909a" stroke-width="0.5"/></svg><div class="abs nowrap" style="left:533px;top:503px;letter-spacing:0.264px">Фильтр...</div><div class="abs nowrap" style="left:753.9px;top:503px;letter-spacing:0.174px">Ctrl+Alt+F</div><div class="abs" style="left:513px;top:522px;width:303px;height:1px;background:#aca899"></div><svg class="abs" style="left:513px;top:527px;overflow:visible" width="17" height="17" viewBox="0 0 17 17"><rect x="0.500" y="1.500" width="14.500" height="12" fill="#fff" stroke="#5a86d0"/><rect x="1" y="2" width="13.500" height="2.500" fill="#8ab0ec"/><path d="M2.500 6.500h2.500M6.500 6.500h2.500M10.500 6.500h2.500M2.500 8.500h2.500M6.500 8.500h2.500M10.500 8.500h2.500M2.500 10.500h2.500M6.500 10.500h2.500M10.500 10.500h2.500" stroke="#a8b4cc" stroke-width="1"/></svg><div class="abs nowrap" style="left:533px;top:530px;letter-spacing:0.218px">Колонки...</div><div class="abs nowrap" style="left:752.9px;top:530px;letter-spacing:0.149px">Ctrl+Alt+C</div><svg class="abs" style="left:513px;top:546px;overflow:visible" width="17" height="17" viewBox="0 0 17 17"><path d="M7.800 0 L10.300 3 H5.300 Z M7.800 15.500 L10.300 12.500 H5.300 Z" fill="#e4e5e9" stroke="#c4c6cc" stroke-width="0.5"/><rect x="0.500" y="3" width="14.500" height="9.500" rx="1.800" fill="#ececf0" stroke="#c0c2c8"/><text x="7.800" y="10.300" font-family="Liberation Sans, sans-serif" font-size="7.500" text-anchor="middle" fill="#606068">a·z</text></svg><div class="abs nowrap" style="left:533px;top:549px;letter-spacing:0.144px">Сортировка...</div><div class="abs nowrap" style="left:753.9px;top:549px;letter-spacing:0.112px">Ctrl+Alt+S</div><svg class="abs" style="left:513px;top:565px;overflow:visible" width="17" height="17" viewBox="0 0 17 17"><rect x="0.500" y="0.500" width="11.500" height="14" fill="#eaf6ff" stroke="#4a88c8"/><rect x="1" y="1" width="10.500" height="2.500" fill="#5aa0e8"/><path d="M2 5.500h9M2 7.500h9M2 9.500h9M2 11.500h9M2 13h9" stroke="#8cc8f0" stroke-width="1"/><path d="M4.500 4v10.500" stroke="#6ab0ec" stroke-width="1"/><path d="M8 8.500 H12 V6 L15.800 10 L12 14 V11.500 H8 Z" fill="#fbfbfb" stroke="#8a929e" stroke-width="0.8"/></svg><div class="abs nowrap" style="left:533px;top:568px;letter-spacing:0.117px">Экспорт данных...</div><div class="abs nowrap" style="left:753.9px;top:568px;letter-spacing:0.112px">Ctrl+Alt+X</div><svg class="abs" style="left:513px;top:584px;overflow:visible" width="17" height="17" viewBox="0 0 17 17"><g id="rf1"><path d="M3.050 8.700 A5 5 0 0 1 11.200 4.200" fill="none" stroke="#149a1c" stroke-width="3.400"/><path d="M13.600 6.600 L13.300 1.800 L8.800 5.700 Z" fill="#149a1c" stroke="#149a1c" stroke-width="1" stroke-linejoin="round"/><path d="M3.050 8.700 A5 5 0 0 1 11.200 4.200" fill="none" stroke="#3cdc3c" stroke-width="2.200"/><path d="M13.600 6.600 L13.300 1.800 L8.800 5.700 Z" fill="#3cdc3c"/></g><g transform="rotate(180 8 8)"><path d="M3.050 8.700 A5 5 0 0 1 11.200 4.200" fill="none" stroke="#149a1c" stroke-width="3.400"/><path d="M13.600 6.600 L13.300 1.800 L8.800 5.700 Z" fill="#149a1c" stroke="#149a1c" stroke-width="1" stroke-linejoin="round"/><path d="M3.050 8.700 A5 5 0 0 1 11.200 4.200" fill="none" stroke="#3cdc3c" stroke-width="2.200"/><path d="M13.600 6.600 L13.300 1.800 L8.800 5.700 Z" fill="#3cdc3c"/></g></svg><div class="abs nowrap" style="left:533px;top:587px;letter-spacing:-0.096px">Обновить данные</div><div class="abs nowrap" style="left:793.8px;top:587px;letter-spacing:-0.431px">F5</div><svg class="abs" style="left:513px;top:603px;overflow:visible" width="17" height="17" viewBox="0 0 17 17"><defs><radialGradient id="ig" cx="40%" cy="28%" r="80%"><stop offset="0" stop-color="#7aa6f8"/><stop offset="0.6" stop-color="#2f62d8"/><stop offset="1" stop-color="#1a3eb0"/></radialGradient></defs><circle cx="8" cy="8.200" r="7.100" fill="url(#ig)" stroke="#2a4ab0" stroke-width="0.5"/><rect x="7" y="7" width="2.200" height="5.500" fill="#fff"/><circle cx="8.100" cy="4.600" r="1.300" fill="#fff"/></svg><div class="abs nowrap" style="left:533px;top:606px;letter-spacing:-0.253px">Информация о записи...</div><svg class="abs" style="left:513px;top:622px;overflow:visible" width="17" height="17" viewBox="0 0 17 17"><rect x="0.500" y="0.500" width="15" height="14" fill="#f2ead8" stroke="#b4a484"/><path d="M1 3.500h14M1 6.500h14M1 9.500h14M1 12.500h14" stroke="#dcd0b4" stroke-width="0.8"/><rect x="2.500" y="7.500" width="3.300" height="7" fill="#e43a2c"/><rect x="2.500" y="7.500" width="1.200" height="7" fill="#f47a6c"/><rect x="6.300" y="3.500" width="3.300" height="11" fill="#34b83c"/><rect x="6.300" y="3.500" width="1.200" height="11" fill="#7ad880"/><rect x="10.100" y="5.500" width="3.300" height="9" fill="#3474dc"/><rect x="10.100" y="5.500" width="1.200" height="9" fill="#7aa8f0"/></svg><div class="abs nowrap" style="left:533px;top:625px;letter-spacing:0.022px">Анализ данных...</div><div class="abs nowrap" style="left:753.9px;top:625px;letter-spacing:0.174px">Ctrl+Alt+Z</div><div class="abs" style="left:4px;top:31px;width:1px;height:715px;background:#f1efea"></div><div class="abs" style="left:0;top:30px;width:4px;height:720px;background:linear-gradient(to right,#0016cc 0,#0016cc 25%,#0a30d8 37%,#1a6af0 50%,#1464ec 75%,#0c58e6 100%)"></div><div class="abs" style="left:946px;top:30px;width:4px;height:720px;background:linear-gradient(to right,#0a50e8 0,#0046e4 45%,#0020a8 55%,#00138c 75%,#000e80 100%)"></div><div class="abs" style="left:0;top:746px;width:950px;height:4px;background:linear-gradient(to bottom,#0a50e8 0,#0046e0 45%,#0020a8 55%,#00138c 75%,#000e80 100%)"></div><div class="abs" style="left:0;top:746px;width:2px;height:4px;background:#0016cc"></div>
</div>
</body></html>
